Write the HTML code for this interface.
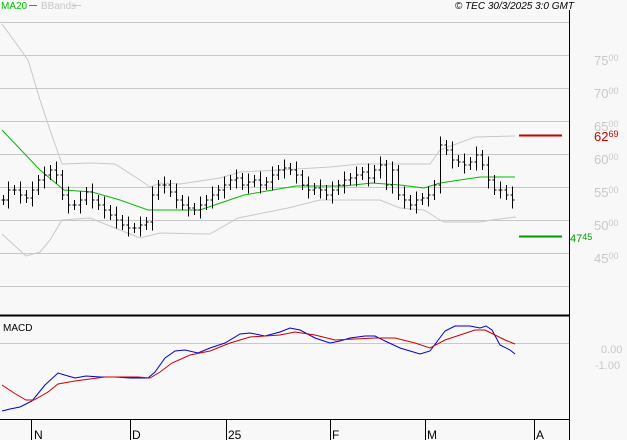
<!DOCTYPE html>
<html><head><meta charset="utf-8"><style>
html,body{margin:0;padding:0;background:#f8f8f8;width:627px;height:440px;overflow:hidden}
svg{display:block}
text{font-family:"Liberation Sans",sans-serif}
</style></head><body>
<svg id="s" width="627" height="440" xmlns="http://www.w3.org/2000/svg">
<rect width="627" height="440" fill="#f8f8f8"/>
<g stroke="#c8c8c8" stroke-width="1">
<line x1="0" y1="22.5" x2="569" y2="22.5"/><line x1="0" y1="55.5" x2="569" y2="55.5"/>
<line x1="0" y1="88.5" x2="569" y2="88.5"/><line x1="0" y1="121.5" x2="569" y2="121.5"/>
<line x1="0" y1="154.5" x2="569" y2="154.5"/><line x1="0" y1="187.5" x2="569" y2="187.5"/>
<line x1="0" y1="220.5" x2="569" y2="220.5"/><line x1="0" y1="253.5" x2="569" y2="253.5"/>
<line x1="0" y1="286.5" x2="569" y2="286.5"/><line x1="0" y1="343.5" x2="569" y2="343.5"/>
</g>
<g fill="#c8c8c8" font-size="13">
<text x="594" y="65">75<tspan font-size="9" dy="-4">00</tspan></text>
<text x="594" y="98">70<tspan font-size="9" dy="-4">00</tspan></text>
<text x="594" y="131">65<tspan font-size="9" dy="-4">00</tspan></text>
<text x="594" y="164">60<tspan font-size="9" dy="-4">00</tspan></text>
<text x="594" y="197">55<tspan font-size="9" dy="-4">00</tspan></text>
<text x="594" y="230">50<tspan font-size="9" dy="-4">00</tspan></text>
<text x="594" y="263">45<tspan font-size="9" dy="-4">00</tspan></text>
<text x="601" y="353" font-size="11">0.00</text>
<text x="595" y="369" font-size="11">-1.00</text>
</g>
<text x="594" y="141" fill="#cc0000" font-size="13">62<tspan font-size="9" dy="-4">69</tspan></text>
<text x="570" y="242" fill="#009900" font-size="11">47<tspan font-size="9" dy="-2">45</tspan></text>
<line x1="519" y1="135.5" x2="562" y2="135.5" stroke="#cc0000" stroke-width="2"/>
<line x1="519" y1="236.5" x2="562" y2="236.5" stroke="#009900" stroke-width="2"/>
<polyline fill="none" stroke="#c8c8c8" points="2,24 28,60 40,100 50,130 62,164 90,163 115,164 140,180 150,187 160,183 180,184 220,178 240,172 280,170 330,167 360,164 390,164 430,164 440,150 475,137 515,136"/>
<polyline fill="none" stroke="#c8c8c8" points="2,234 26,256 40,252 50,240 62,220 90,218 110,226 130,234 140,238 160,233 210,234 238,218 288,208 320,200 380,200 400,208 424,210 440,220 444,222 480,222 492,220 516,217"/>
<polyline fill="none" stroke="#00bb00" points="2,130 40,170 64,190 92,192 120,200 148,210 200,210 244,195 296,186 344,186 372,183 400,185 424,188 440,183 480,177 515,177"/>
<g id="bars" stroke="#000" stroke-width="1"></g>
<line x1="569.5" y1="10" x2="569.5" y2="440" stroke="#000"/>
<line x1="0" y1="315.5" x2="569" y2="315.5" stroke="#000" stroke-width="2"/>
<line x1="0" y1="419.5" x2="569" y2="419.5" stroke="#000"/>
<g stroke="#000"><line x1="31.5" y1="419" x2="31.5" y2="440"/><line x1="130.5" y1="419" x2="130.5" y2="440"/><line x1="226.5" y1="419" x2="226.5" y2="440"/><line x1="330.5" y1="419" x2="330.5" y2="440"/><line x1="425.5" y1="419" x2="425.5" y2="440"/><line x1="534.5" y1="419" x2="534.5" y2="440"/></g>
<g font-size="12" fill="#000"><text x="34" y="439">N</text><text x="132" y="439">D</text><text x="228" y="439">25</text><text x="332" y="439">F</text><text x="427" y="439">M</text><text x="536" y="439">A</text></g>
<polyline fill="none" stroke="#0000cc" points="2,411 10,409 20,407 32,401 45,385 58,373 68,376 75,378 86,376 100,377 115,377 130,378 148,378 155,372 165,358 175,351 185,350 198,353 210,348 225,343 240,334 250,333 265,336 280,332 290,328 300,330 315,338 330,343 340,341 350,338 365,336 375,336 385,341 400,348 420,354 430,351 445,331 455,326 470,326 480,328 486,326 492,330 500,345 510,350 515,354"/>
<polyline fill="none" stroke="#cc0000" points="2,385 14,393 26,400 34,400 48,392 58,384 75,381 90,379 105,377 138,377 150,378 160,372 172,363 190,355 210,351 230,343 250,337 280,335 295,332 315,335 335,340 355,339 375,338 395,338 415,343 430,348 445,340 460,335 475,330 485,330 495,335 505,340 515,344"/>
<text x="3" y="331" font-size="10" fill="#000">MACD</text>
<text x="1" y="9" font-size="10" fill="#00bb00">MA20</text>
<line x1="29" y1="5.5" x2="37" y2="5.5" stroke="#00bb00"/>
<text x="41" y="9" font-size="10" fill="#c8c8c8">BBands</text>
<line x1="73" y1="5.5" x2="81" y2="5.5" stroke="#c8c8c8"/>
<text x="574" y="9" font-size="10" font-style="italic" fill="#000" text-anchor="end">© TEC 30/3/2025 3:0 GMT</text>
</svg>
<script>
var d=[[3,200],[8,190],[14,190],[20,195],[26,198],[32,190],[38,180],[44,175],[50,170],[56,175],[62,195],[68,205],[74,205],[80,200],[86,192],[92,200],[98,205],[104,210],[110,215],[116,220],[122,225],[128,228],[134,228],[140,225],[146,222],[152,195],[158,185],[164,185],[170,192],[176,200],[182,205],[188,208],[194,210],[200,205],[206,200],[212,195],[218,190],[224,185],[230,180],[236,178],[242,185],[248,182],[254,180],[260,185],[266,182],[272,175],[278,170],[284,168],[290,170],[296,175],[302,185],[308,190],[314,188],[320,190],[326,195],[332,190],[338,185],[344,180],[350,178],[356,175],[362,172],[368,178],[374,170],[380,165],[386,185],[392,170],[398,195],[404,200],[410,205],[416,200],[422,198],[428,195],[434,185],[440,145],[446,150],[452,160],[458,162],[464,165],[470,162],[476,155],[482,165],[488,180],[494,190],[500,190],[506,195],[512,200]];
var g=document.getElementById('bars'),h='';
for(var i=0;i<d.length;i++){var x=d[i][0]+.5,m=d[i][1],r=10+((i*7)%14),p=i>0?d[i-1][1]:m;
var hi=Math.min(m,p)-r/2,lo=Math.max(m,p)+r/2;
h+='<line x1="'+x+'" y1="'+hi+'" x2="'+x+'" y2="'+lo+'"/><line x1="'+(x-2)+'" y1="'+p+'" x2="'+x+'" y2="'+p+'"/><line x1="'+x+'" y1="'+m+'" x2="'+(x+2)+'" y2="'+m+'"/>';}
g.innerHTML=h;
</script>
</body></html>
